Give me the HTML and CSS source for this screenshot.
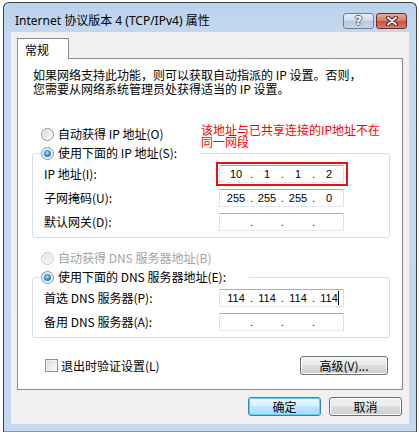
FILE: index.html
```html
<!DOCTYPE html>
<html lang="zh-CN">
<head>
<meta charset="utf-8">
<title>Internet 协议版本 4 (TCP/IPv4) 属性</title>
<link rel="stylesheet" href="styles.css">
</head>
<body>
<div class="window">
  <div class="titlebar">
    <span class="title">Internet 协议版本 4 (TCP/IPv4) 属性</span>
    <div class="caption-btns">
      <span class="cap help">?</span>
      <span class="cap close">
        <svg width="14" height="10" viewBox="0 0 14 10">
          <path d="M3 1.5 L11 8.5 M11 1.5 L3 8.5" stroke="#4a1a14" stroke-width="4" stroke-linecap="round" fill="none"/>
          <path d="M3 1.5 L11 8.5 M11 1.5 L3 8.5" stroke="#ffffff" stroke-width="2" stroke-linecap="round" fill="none"/>
        </svg>
      </span>
    </div>
  </div>
  <div class="client">
    <div class="tabs"><div class="tab">常规</div></div>
    <div class="panel">
      <p class="desc">如果网络支持此功能，则可以获取自动指派的 IP 设置。否则，<br>您需要从网络系统管理员处获得适当的 IP 设置。</p>
      <div class="note">该地址与已共享连接的IP地址不在<br>同一网段</div>
      <div class="radio-row"><span class="radio"></span>自动获得 IP 地址(O)</div>
      <fieldset class="group">
        <legend><span class="radio checked"></span>使用下面的 IP 地址(S):</legend>
        <div class="rows">
          <span class="lbl">IP 地址(I):</span>
          <div class="ip marked"><span class="seg">10</span><span class="dot">.</span><span class="seg">1</span><span class="dot">.</span><span class="seg">1</span><span class="dot">.</span><span class="seg">2</span></div>
          <span class="lbl">子网掩码(U):</span>
          <div class="ip"><span class="seg">255</span><span class="dot">.</span><span class="seg">255</span><span class="dot">.</span><span class="seg">255</span><span class="dot">.</span><span class="seg">0</span></div>
          <span class="lbl">默认网关(D):</span>
          <div class="ip"><span class="seg"></span><span class="dot">.</span><span class="seg"></span><span class="dot">.</span><span class="seg"></span><span class="dot">.</span><span class="seg"></span></div>
        </div>
      </fieldset>
      <div class="radio-row disabled gap-top"><span class="radio"></span>自动获得 DNS 服务器地址(B)</div>
      <fieldset class="group">
        <legend><span class="radio checked"></span>使用下面的 DNS 服务器地址(E):</legend>
        <div class="rows">
          <span class="lbl">首选 DNS 服务器(P):</span>
          <div class="ip"><span class="seg">114</span><span class="dot">.</span><span class="seg">114</span><span class="dot">.</span><span class="seg">114</span><span class="dot">.</span><span class="seg caret">114</span></div>
          <span class="lbl">备用 DNS 服务器(A):</span>
          <div class="ip"><span class="seg"></span><span class="dot">.</span><span class="seg"></span><span class="dot">.</span><span class="seg"></span><span class="dot">.</span><span class="seg"></span></div>
        </div>
      </fieldset>
      <div class="panel-foot">
        <div class="check-row"><span class="checkbox"></span>退出时验证设置(L)</div>
        <span class="btn adv">高级(V)...</span>
      </div>
    </div>
    <div class="dlg-buttons">
      <span class="btn default">确定</span>
      <span class="btn">取消</span>
    </div>
  </div>
</div>
</body>
</html>
```

FILE: styles.css
```css
html, body {
  margin: 0;
  padding: 0;
  background: #ffffff;
}

body {
  font-family: "Noto Sans CJK SC", "Noto Sans", sans-serif;
  font-size: 12px;
  color: #000;
}

.window {
  box-sizing: border-box;
  width: 414px;
  height: 430px;
  margin: 2px 0 0 3px;
  border: 1px solid #3a3f48;
  border-bottom-color: #38b9dc;
  border-radius: 6px 6px 0 0;
  background: linear-gradient(#bcd3ec, #c6daf0 40px, #c3d8ef);
  display: flex;
  flex-direction: column;
}

.titlebar {
  height: 29px;
  display: flex;
  justify-content: space-between;
  align-items: flex-start;
  padding: 10px 9px 0 11px;
  box-sizing: border-box;
}

.title {
  font-family: "Noto Sans", "Noto Sans CJK SC", sans-serif;
  font-size: 12px;
  line-height: 16px;
  color: #000;
  white-space: nowrap;
}

.caption-btns {
  display: flex;
  gap: 2px;
}

.cap {
  box-sizing: border-box;
  width: 31px;
  height: 16px;
  border-radius: 3px;
  display: flex;
  align-items: center;
  justify-content: center;
}

.help {
  border: 1px solid #6a7d95;
  background: linear-gradient(#e4edf7, #cddcee 50%, #b6c9e0 50%, #c8d8eb);
  font-family: "DejaVu Sans", sans-serif;
  font-weight: bold;
  font-size: 13px;
  line-height: 14px;
  color: #ffffff;
  text-shadow: 1px 0 0 #55657a, -1px 0 0 #55657a, 0 1px 0 #55657a, 0 -1px 0 #55657a;
}

.close {
  border: 1px solid #6e2a22;
  background: linear-gradient(#eaa89b, #d77a69 50%, #c5503c 50%, #d67f6a);
}

.client {
  box-sizing: border-box;
  width: 398px;
  height: 392px;
  margin: 0 7px;
  background: #f0f0f0;
  padding: 6px 6px 0 6px;
  display: flex;
  flex-direction: column;
}

.tabs {
  display: flex;
  height: 20px;
  position: relative;
  z-index: 1;
}

.tab {
  box-sizing: border-box;
  width: 52px;
  height: 21px;
  border: 1px solid #898c95;
  border-bottom: none;
  background: #ffffff;
  padding: 3px 0 0 7px;
  line-height: 16px;
  font-size: 12px;
}

.panel {
  position: relative;
  box-sizing: border-box;
  border: 1px solid #898c95;
  background: #ffffff;
  padding: 9px 12px 14px 14px;
}

.desc {
  margin: 0;
  padding-left: 1px;
  line-height: 14px;
  white-space: nowrap;
}

.note {
  position: absolute;
  left: 183px;
  top: 65px;
  color: #ff0000;
  font-size: 12px;
  line-height: 12px;
  white-space: nowrap;
}

.radio-row {
  display: flex;
  align-items: center;
  height: 16px;
  line-height: 16px;
  margin: 30px 0 0 9px;
}

.radio-row.gap-top {
  margin-top: 12px;
}

.radio-row.disabled {
  color: #a3a3a3;
}

.radio {
  position: relative;
  box-sizing: border-box;
  flex: none;
  width: 13px;
  height: 13px;
  border-radius: 50%;
  border: 1px solid #8d8f91;
  background: linear-gradient(135deg, #cfd0d2, #f4f4f4 70%, #ffffff);
  box-shadow: inset 0 0 0 1px #f7f7f7;
  margin-right: 4px;
}

.radio-row.disabled .radio {
  border-color: #c5c6c8;
  background: linear-gradient(135deg, #e3e3e3, #f6f6f6);
}

.radio.checked::after {
  content: "";
  position: absolute;
  left: 2px;
  top: 2px;
  width: 7px;
  height: 7px;
  border-radius: 50%;
  background: radial-gradient(circle at 45% 40%, #b5e2ff 0, #3d94dd 45%, #0c4a8f 100%);
}

.group {
  margin: 3px 0 0 0;
  padding: 4px 11px 6px 11px;
  border: 1px solid #d5dfe5;
  border-radius: 3px;
  min-width: 0;
}

.group legend {
  display: flex;
  align-items: center;
  height: 16px;
  line-height: 16px;
  margin-left: -3px;
  padding: 0 23px 0 0;
}

.rows {
  display: grid;
  grid-template-columns: 175px 125px;
  grid-auto-rows: 18px;
  row-gap: 6px;
  align-items: center;
}

.lbl {
  line-height: 16px;
  white-space: nowrap;
}

.ip {
  position: relative;
  box-sizing: border-box;
  height: 18px;
  border: 1px solid;
  border-color: #abadb3 #dbdfe6 #e3e9ef #e2e3ea;
  background: #fff;
  display: flex;
  align-items: center;
  padding-left: 3px;
  font-family: "Liberation Sans", sans-serif;
  font-size: 11px;
  line-height: 14px;
}

.ip.marked::before {
  content: "";
  position: absolute;
  left: -4px;
  top: -4px;
  right: -5px;
  bottom: -4px;
  border: 2px solid #e81010;
}

.seg {
  position: relative;
  width: 26px;
  text-align: center;
}

.dot {
  width: 5px;
  text-align: center;
}

.seg.caret::after {
  content: "";
  position: absolute;
  right: 3px;
  top: 0;
  width: 1px;
  height: 14px;
  background: #000;
}

.panel-foot {
  display: flex;
  justify-content: space-between;
  align-items: center;
  height: 19px;
  margin-top: 18px;
}

.check-row {
  display: flex;
  align-items: center;
  margin-left: 13px;
  line-height: 16px;
}

.checkbox {
  box-sizing: border-box;
  width: 13px;
  height: 13px;
  border: 1px solid #8e8f8f;
  background: linear-gradient(135deg, #d2d3d4, #f3f3f3 70%, #fdfdfd);
  box-shadow: inset 0 0 0 1px #f4f4f4;
  margin-right: 3px;
}

.btn {
  box-sizing: border-box;
  display: flex;
  align-items: center;
  justify-content: center;
  width: 73px;
  height: 19px;
  border: 1px solid #707070;
  border-radius: 3px;
  background: linear-gradient(#f2f2f2, #ebebeb 50%, #dddddd 50%, #cfcfcf);
  box-shadow: inset 0 0 0 1px #fbfbfb;
  font-size: 12px;
  line-height: 16px;
}

.btn.adv {
  width: 88px;
  margin-right: 2px;
}

.btn.default {
  border-color: #3c7fb1;
  background: linear-gradient(#ebf7fe, #daf0fc 50%, #bee6fd 50%, #a9dbf6);
  box-shadow: inset 0 0 0 1px #5fd3f5;
}

.dlg-buttons {
  display: flex;
  justify-content: flex-end;
  gap: 8px;
  margin-top: 7px;
  padding-right: 1px;
}
```
